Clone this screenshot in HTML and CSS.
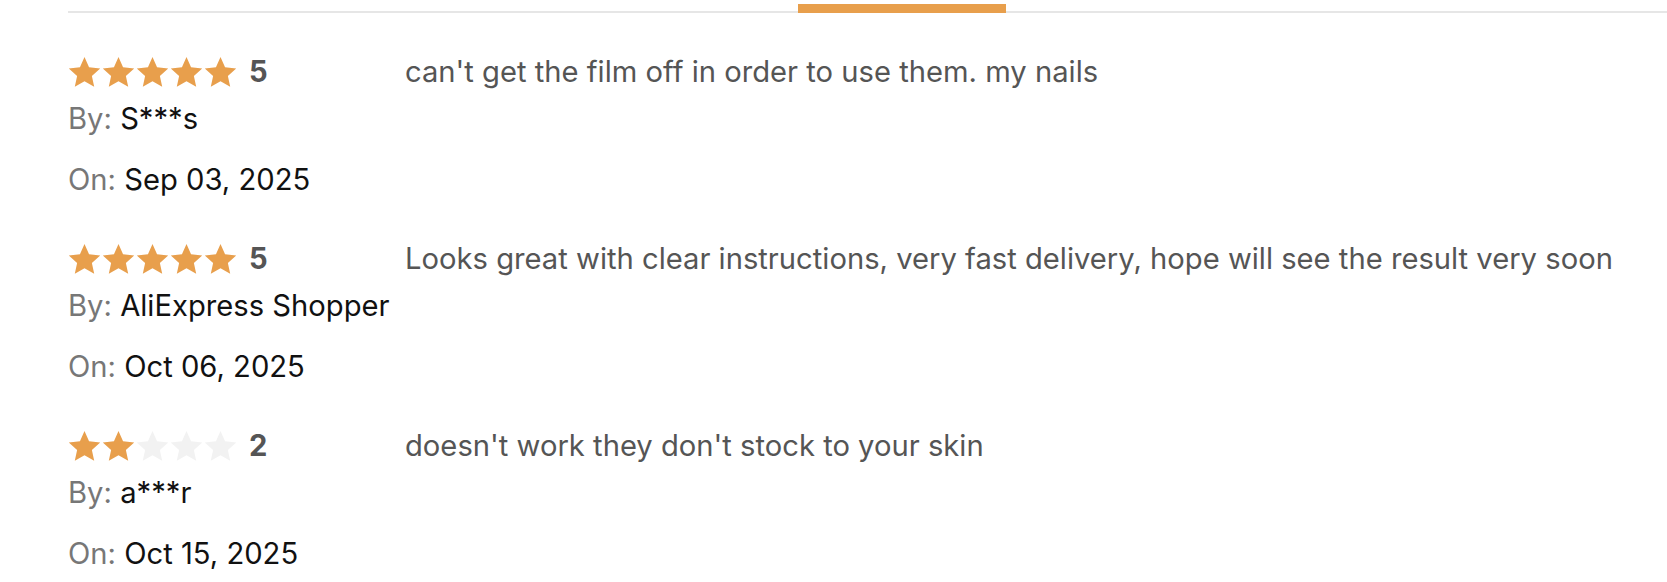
FILE: index.html
```html
<!DOCTYPE html>
<html lang="en">
<head>
<meta charset="utf-8">
<title>Reviews</title>
<link rel="stylesheet" href="styles.css">
</head>
<body>
<div class="reviews">
  <div class="tabs">
    <span class="tab-active"></span>
  </div>

  <div class="review">
    <div class="meta">
      <div class="rating">
        <div class="stars">
          <svg class="star filled" viewBox="0 0 33 30"><path d="M16.5 0L21.06 10.22L32.19 11.4L23.88 18.9L26.2 29.85L16.5 24.26L6.8 29.85L9.12 18.9L0.81 11.4L11.94 10.22Z"/></svg>
          <svg class="star filled" viewBox="0 0 33 30"><path d="M16.5 0L21.06 10.22L32.19 11.4L23.88 18.9L26.2 29.85L16.5 24.26L6.8 29.85L9.12 18.9L0.81 11.4L11.94 10.22Z"/></svg>
          <svg class="star filled" viewBox="0 0 33 30"><path d="M16.5 0L21.06 10.22L32.19 11.4L23.88 18.9L26.2 29.85L16.5 24.26L6.8 29.85L9.12 18.9L0.81 11.4L11.94 10.22Z"/></svg>
          <svg class="star filled" viewBox="0 0 33 30"><path d="M16.5 0L21.06 10.22L32.19 11.4L23.88 18.9L26.2 29.85L16.5 24.26L6.8 29.85L9.12 18.9L0.81 11.4L11.94 10.22Z"/></svg>
          <svg class="star filled" viewBox="0 0 33 30"><path d="M16.5 0L21.06 10.22L32.19 11.4L23.88 18.9L26.2 29.85L16.5 24.26L6.8 29.85L9.12 18.9L0.81 11.4L11.94 10.22Z"/></svg>
        </div>
        <span class="score">5</span>
      </div>
      <div class="by-line"><span class="label">By:</span> S***s</div>
      <div class="date-line"><span class="label">On:</span> Sep 03, 2025</div>
    </div>
    <p class="text">can't get the film off in order to use them. my nails</p>
  </div>

  <div class="review">
    <div class="meta">
      <div class="rating">
        <div class="stars">
          <svg class="star filled" viewBox="0 0 33 30"><path d="M16.5 0L21.06 10.22L32.19 11.4L23.88 18.9L26.2 29.85L16.5 24.26L6.8 29.85L9.12 18.9L0.81 11.4L11.94 10.22Z"/></svg>
          <svg class="star filled" viewBox="0 0 33 30"><path d="M16.5 0L21.06 10.22L32.19 11.4L23.88 18.9L26.2 29.85L16.5 24.26L6.8 29.85L9.12 18.9L0.81 11.4L11.94 10.22Z"/></svg>
          <svg class="star filled" viewBox="0 0 33 30"><path d="M16.5 0L21.06 10.22L32.19 11.4L23.88 18.9L26.2 29.85L16.5 24.26L6.8 29.85L9.12 18.9L0.81 11.4L11.94 10.22Z"/></svg>
          <svg class="star filled" viewBox="0 0 33 30"><path d="M16.5 0L21.06 10.22L32.19 11.4L23.88 18.9L26.2 29.85L16.5 24.26L6.8 29.85L9.12 18.9L0.81 11.4L11.94 10.22Z"/></svg>
          <svg class="star filled" viewBox="0 0 33 30"><path d="M16.5 0L21.06 10.22L32.19 11.4L23.88 18.9L26.2 29.85L16.5 24.26L6.8 29.85L9.12 18.9L0.81 11.4L11.94 10.22Z"/></svg>
        </div>
        <span class="score">5</span>
      </div>
      <div class="by-line"><span class="label">By:</span> AliExpress Shopper</div>
      <div class="date-line"><span class="label">On:</span> Oct 06, 2025</div>
    </div>
    <p class="text">Looks great with clear instructions, very fast delivery, hope will see the result very soon</p>
  </div>

  <div class="review">
    <div class="meta">
      <div class="rating">
        <div class="stars">
          <svg class="star filled" viewBox="0 0 33 30"><path d="M16.5 0L21.06 10.22L32.19 11.4L23.88 18.9L26.2 29.85L16.5 24.26L6.8 29.85L9.12 18.9L0.81 11.4L11.94 10.22Z"/></svg>
          <svg class="star filled" viewBox="0 0 33 30"><path d="M16.5 0L21.06 10.22L32.19 11.4L23.88 18.9L26.2 29.85L16.5 24.26L6.8 29.85L9.12 18.9L0.81 11.4L11.94 10.22Z"/></svg>
          <svg class="star empty" viewBox="0 0 33 30"><path d="M16.5 0L21.06 10.22L32.19 11.4L23.88 18.9L26.2 29.85L16.5 24.26L6.8 29.85L9.12 18.9L0.81 11.4L11.94 10.22Z"/></svg>
          <svg class="star empty" viewBox="0 0 33 30"><path d="M16.5 0L21.06 10.22L32.19 11.4L23.88 18.9L26.2 29.85L16.5 24.26L6.8 29.85L9.12 18.9L0.81 11.4L11.94 10.22Z"/></svg>
          <svg class="star empty" viewBox="0 0 33 30"><path d="M16.5 0L21.06 10.22L32.19 11.4L23.88 18.9L26.2 29.85L16.5 24.26L6.8 29.85L9.12 18.9L0.81 11.4L11.94 10.22Z"/></svg>
        </div>
        <span class="score">2</span>
      </div>
      <div class="by-line"><span class="label">By:</span> a***r</div>
      <div class="date-line"><span class="label">On:</span> Oct 15, 2025</div>
    </div>
    <p class="text">doesn't work they don't stock to your skin</p>
  </div>
</div>
</body>
</html>
```

FILE: styles.css
```css
* {
  box-sizing: border-box;
}

html, body {
  margin: 0;
  padding: 0;
  background: #ffffff;
}

body {
  font-family: Inter, "Noto Sans", "Liberation Sans", sans-serif;
  font-size: 29.2px;
  color: #111111;
  overflow: hidden;
}

.reviews {
  padding-left: 68px;
  padding-top: 4px;
}

.tabs {
  display: flex;
  height: 9px;
  border-bottom: 2px solid #e6e6e6;
  margin-bottom: 43px;
  padding-left: 730px;
}

.tab-active {
  display: block;
  width: 208px;
  height: 9px;
  background: #e89f4c;
}

.review {
  display: flex;
  align-items: flex-start;
  margin-bottom: 45px;
}

.meta {
  width: 337px;
  flex: 0 0 337px;
}

.rating {
  display: flex;
  align-items: center;
  height: 32px;
}

.stars {
  display: flex;
  gap: 1px;
}

.star {
  width: 33px;
  height: 30px;
  display: block;
}

.star.filled {
  fill: #e89f4c;
}

.star.empty {
  fill: #f2f2f2;
}

.score {
  margin-left: 12px;
  font-weight: 700;
  color: #555555;
  line-height: 32px;
}

.by-line,
.date-line {
  line-height: 36px;
  white-space: nowrap;
}

.by-line {
  margin-top: 13px;
}

.date-line {
  margin-top: 25px;
}

.label {
  color: #777777;
}

.text {
  margin: 0;
  line-height: 32px;
  color: #555555;
  white-space: nowrap;
}
```
